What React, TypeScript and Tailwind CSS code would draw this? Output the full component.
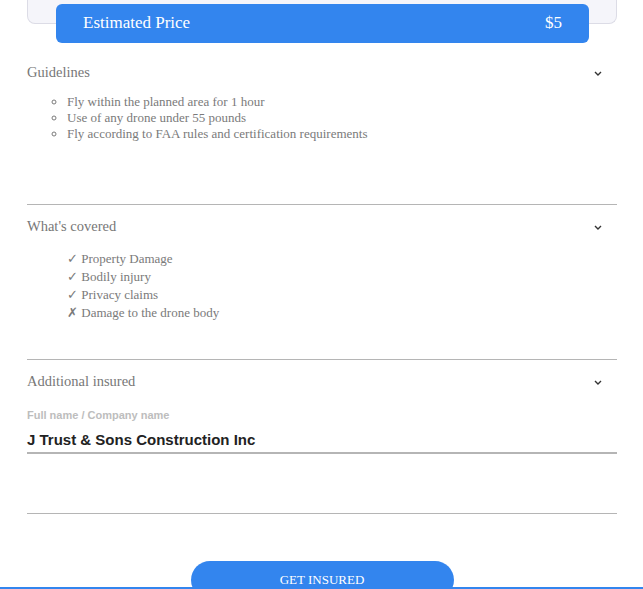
import React from 'react'

const serif = { fontFamily: '"Liberation Serif", "Times New Roman", serif' }
const sans = { fontFamily: '"Liberation Sans", Arial, Helvetica, sans-serif' }

function Chevron() {
  return (
    <svg width="8" height="5" viewBox="0 0 8 5" className="text-[#333]">
      <polyline points="1,1 4,4 7,1" fill="none" stroke="currentColor" strokeWidth="1.4" />
    </svg>
  )
}

function SectionHeader({ title }: { title: string }) {
  return (
    <div className="flex h-[20px] items-center justify-between pr-[15px]">
      <span className="text-[14.5px] text-[#777]">{title}</span>
      <Chevron />
    </div>
  )
}

const guidelines = [
  'Fly within the planned area for 1 hour',
  'Use of any drone under 55 pounds',
  'Fly according to FAA rules and certification requirements',
]

const coverage = [
  { ok: true, label: 'Property Damage' },
  { ok: true, label: 'Bodily injury' },
  { ok: true, label: 'Privacy claims' },
  { ok: false, label: 'Damage to the drone body' },
]

export default function App() {
  return (
    <div className="relative min-h-[589px] overflow-hidden bg-white pl-[27px] pr-[26px]" style={serif}>
      {/* Summary card */}
      <div className="h-[24px] rounded-b-lg border border-t-0 border-[#dcdce6] bg-[#f5f5fa]" />
      <div className="-mt-[20px] ml-[29px] mr-[28px] flex h-[39px] items-center justify-between rounded-md bg-[#3385ee] px-[27px] pb-[2px] text-[17px] text-white">
        <span>Estimated Price</span>
        <span>$5</span>
      </div>

      {/* Guidelines */}
      <section className="h-[162px] border-b border-[#b5b5b5] pt-[20px]">
        <SectionHeader title="Guidelines" />
        <ul className="mt-[11px] list-[circle] pl-10 text-[13px] leading-4 text-[#7a7a7a]">
          {guidelines.map((g) => (
            <li key={g}>{g}</li>
          ))}
        </ul>
      </section>

      {/* What's covered */}
      <section className="h-[155px] border-b border-[#b5b5b5] pt-[12px]">
        <SectionHeader title="What's covered" />
        <div className="mt-[13px] pl-10 text-[13px] leading-[18px] text-[#7a7a7a]">
          {coverage.map((c) => (
            <div key={c.label}>
              {c.ok ? '✓' : '✗'} {c.label}
            </div>
          ))}
        </div>
      </section>

      {/* Additional insured */}
      <section className="h-[154px] border-b border-[#b5b5b5] pt-[12px]">
        <SectionHeader title="Additional insured" />
        <div className="mt-[16px] text-[11px] font-bold leading-[14px] text-[#bdbdbd]" style={sans}>
          Full name / Company name
        </div>
        <div className="mt-[8px] border-b-2 border-[#b5b5b5] pb-[2px] text-[15px] font-bold leading-[20px] text-[#222]" style={sans}>
          J Trust &amp; Sons Construction Inc
        </div>
      </section>

      <div className="mt-[47px] flex justify-center">
        <button className="h-[38px] w-[263px] rounded-full bg-[#3385ee] text-[13px] text-white uppercase">
          Get insured
        </button>
      </div>

      <div className="fixed bottom-0 left-0 h-[2px] w-full bg-[#3385ee]" />
    </div>
  )
}
